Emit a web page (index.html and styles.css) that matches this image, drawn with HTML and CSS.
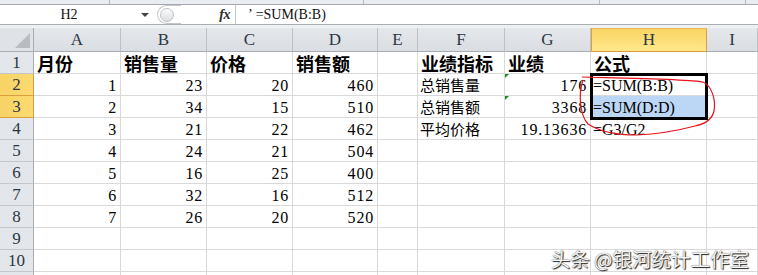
FILE: index.html
```html
<!DOCTYPE html>
<html>
<head>
<meta charset="utf-8">
<link rel="stylesheet" href="styles.css">
</head>
<body>
<div class="app">
  <div class="ribbon-edge">
    <div class="seg w1"></div><div class="seg w2"></div><div class="seg w3"></div><div class="seg w4"></div><div class="seg last"></div>
  </div>
  <div class="fbar">
    <div class="namebox">H2</div>
    <div class="nb-arrow"><span class="tri"></span></div>
    <div class="knob"><span class="dot"></span></div>
    <div class="fx"><span>fx</span></div>
    <div class="finput"><span class="apos">’</span>=SUM(B:B)</div>
  </div>
  <div class="gap"></div>
  <div class="sheet">
    <div class="corner"><svg width="34" height="24" viewBox="0 0 34 24"><polygon points="15,20 30,20 30,5" fill="#b9bdc2"/></svg></div>
    <div class="ch">A</div><div class="ch">B</div><div class="ch">C</div><div class="ch">D</div><div class="ch">E</div><div class="ch">F</div><div class="ch">G</div><div class="ch sel">H</div><div class="ch">I</div>

    <div class="rh">1</div>
    <div class="c hd">月份</div><div class="c hd">销售量</div><div class="c hd">价格</div><div class="c hd">销售额</div><div class="c"></div><div class="c hd">业绩指标</div><div class="c hd">业绩</div><div class="c hd">公式</div><div class="c"></div>

    <div class="rh sel">2</div>
    <div class="c num">1</div><div class="c num">23</div><div class="c num">20</div><div class="c num">460</div><div class="c"></div><div class="c zh">总销售量</div><div class="c num flag">176</div><div class="c fm">=SUM(B:B)</div><div class="c"></div>

    <div class="rh sel">3</div>
    <div class="c num">2</div><div class="c num">34</div><div class="c num">15</div><div class="c num">510</div><div class="c"></div><div class="c zh">总销售额</div><div class="c num flag">3368</div><div class="c fm hl">=SUM(D:D)</div><div class="c"></div>

    <div class="rh">4</div>
    <div class="c num">3</div><div class="c num">21</div><div class="c num">22</div><div class="c num">462</div><div class="c"></div><div class="c zh">平均价格</div><div class="c num">19.13636</div><div class="c fm">=G3/G2</div><div class="c"></div>

    <div class="rh">5</div>
    <div class="c num">4</div><div class="c num">24</div><div class="c num">21</div><div class="c num">504</div><div class="c"></div><div class="c"></div><div class="c"></div><div class="c"></div><div class="c"></div>

    <div class="rh">6</div>
    <div class="c num">5</div><div class="c num">16</div><div class="c num">25</div><div class="c num">400</div><div class="c"></div><div class="c"></div><div class="c"></div><div class="c"></div><div class="c"></div>

    <div class="rh">7</div>
    <div class="c num">6</div><div class="c num">32</div><div class="c num">16</div><div class="c num">512</div><div class="c"></div><div class="c"></div><div class="c"></div><div class="c"></div><div class="c"></div>

    <div class="rh">8</div>
    <div class="c num">7</div><div class="c num">26</div><div class="c num">20</div><div class="c num">520</div><div class="c"></div><div class="c"></div><div class="c"></div><div class="c"></div><div class="c"></div>

    <div class="rh">9</div>
    <div class="c"></div><div class="c"></div><div class="c"></div><div class="c"></div><div class="c"></div><div class="c"></div><div class="c"></div><div class="c"></div><div class="c"></div>

    <div class="rh">10</div>
    <div class="c"></div><div class="c"></div><div class="c"></div><div class="c"></div><div class="c"></div><div class="c"></div><div class="c"></div><div class="c"></div><div class="c"></div>

    <div class="rh"></div>
    <div class="c"></div><div class="c"></div><div class="c"></div><div class="c"></div><div class="c"></div><div class="c"></div><div class="c"></div><div class="c"></div><div class="c"></div>

    <div class="selbox"></div>
  </div>
  <svg class="mark" width="758" height="275" viewBox="0 0 758 275">
    <path d="M582 77 C620 78 690 79 703 82 C712 86 716 100 714 111 C712 120 705 124 695 126 C680 130 660 134 637 135 C618 135 600 132 588 124 C580 115 578 95 583 80" fill="none" stroke="#e8141c" stroke-width="1.2"/>
  </svg>
  <div class="watermark">头条 @银河统计工作室</div>
</div>
</body>
</html>
```
FILE: styles.css
```css
html, body {
  margin: 0;
  padding: 0;
  background: #fff;
}
.app {
  position: relative;
  width: 758px;
  height: 275px;
  overflow: hidden;
  font-family: "Liberation Serif", serif;
}
.ribbon-edge {
  display: flex;
  height: 4px;
  background: #e9ecf0;
  border-bottom: 1px solid #a2a8ae;
}
.seg { border-right: 1px solid #b5bac0; }
.w1 { width: 109px; }
.w2 { width: 253px; }
.w3 { width: 235px; }
.w4 { width: 145px; }
.last { flex: 1; border-right: none; }

.fbar {
  display: flex;
  height: 19px;
  background: #fff;
  border-bottom: 1px solid #a9aeb4;
}
.namebox {
  width: 138px;
  text-align: center;
  font: 14px/19px "Liberation Serif", serif;
  color: #111;
}
.nb-arrow {
  width: 14px;
  display: flex;
  align-items: center;
  justify-content: center;
}
.tri {
  width: 0;
  height: 0;
  border-left: 4px solid transparent;
  border-right: 4px solid transparent;
  border-top: 4px solid #444;
}
.knob {
  margin-left: 5px;
  width: 21px;
  height: 17px;
  border: 1px solid #c3c7cc;
  border-right: none;
  border-radius: 10px 0 0 10px;
  display: flex;
  align-items: center;
  justify-content: flex-start;
  padding-left: 2px;
  box-sizing: content-box;
}
.dot {
  width: 12px;
  height: 12px;
  border-radius: 50%;
  border: 1px solid #bfc3c8;
  background: linear-gradient(#fafafa, #dcdfe2);
}
.fx {
  display: flex;
  justify-content: flex-end;
  align-items: center;
  padding-right: 5px;
  border-right: 1px solid #c3c7cc;
  box-sizing: border-box;
  width: 55px;
}
.fx span {
  font: italic bold 14px "Liberation Serif", serif;
  color: #2a2a2a;
  letter-spacing: -0.5px;
}
.finput {
  flex: 1;
  padding-left: 12px;
  font: 14px/19px "Liberation Serif", serif;
  color: #111;
}
.apos { margin-right: 3px; }
.gap {
  height: 3px;
  background: #eef0f2;
}

.sheet {
  position: relative;
  display: grid;
  grid-template-columns: 34px 87px 86px 86px 85px 40px 87px 86px 116px 51px;
  grid-template-rows: 24px repeat(11, 22px);
}
.corner {
  background: #dfe3e8;
  border-right: 1px solid #a7adb4;
  border-bottom: 1px solid #a7adb4;
  box-sizing: border-box;
}
.corner svg { display: block; }
.ch {
  box-sizing: border-box;
  background: linear-gradient(#e4e7eb, #dadee3);
  border-right: 1px solid #bcc1c7;
  border-bottom: 1px solid #a7adb4;
  text-align: center;
  font: 17px/24px "Liberation Serif", serif;
  color: #2c3643;
}
.ch.sel {
  background: linear-gradient(#f9d463, #ffe88c);
  border: 1px solid #dd9f3c;
  border-top-color: #e7b85c;
  line-height: 22px;
}
.rh {
  box-sizing: border-box;
  background: #e3e6ea;
  border-right: 1px solid #a7adb4;
  border-bottom: 1px solid #c4c8cd;
  text-align: center;
  font: 17px/22px "Liberation Serif", serif;
  color: #2c3643;
}
.rh.sel {
  background: linear-gradient(90deg, #f8d365, #fcdb72);
  border-right-color: #dd9f3c;
  border-bottom-color: #dd9f3c;
}
.c {
  position: relative;
  box-sizing: border-box;
  border-right: 1px solid #d9d9d9;
  border-bottom: 1px solid #d9d9d9;
  padding: 0 3px 0 3px;
  white-space: nowrap;
  font: 16px/23px "Liberation Serif", serif;
  color: #000;
}
.num {
  text-align: right;
  letter-spacing: 0.8px;
  padding-right: 3px;
}
.hd {
  font: bold 18px/22px "Noto Sans CJK SC", sans-serif;
  padding-left: 3px;
}
.zh {
  font: 15px/22px "Noto Sans CJK SC", sans-serif;
  padding-left: 2px;
}
.fm { padding-left: 2px; }
.hl { background: #bcd7f5; }
.flag::before {
  content: "";
  position: absolute;
  left: 0;
  top: 0;
  border-top: 4px solid #1f8a23;
  border-right: 4px solid transparent;
}
.selbox {
  position: absolute;
  left: 590px;
  top: 45px;
  width: 118px;
  height: 47px;
  border: 3px solid #000;
  box-sizing: border-box;
}
.mark {
  position: absolute;
  left: 0;
  top: 0;
  pointer-events: none;
}
.watermark {
  position: absolute;
  right: 9px;
  bottom: 6px;
  font: 19.5px/20px "Noto Sans CJK SC", sans-serif;
  color: #f4f4f4;
  text-shadow: 1px 1px 1px #1e1e1e, 0 0 1px #444;
}
```
